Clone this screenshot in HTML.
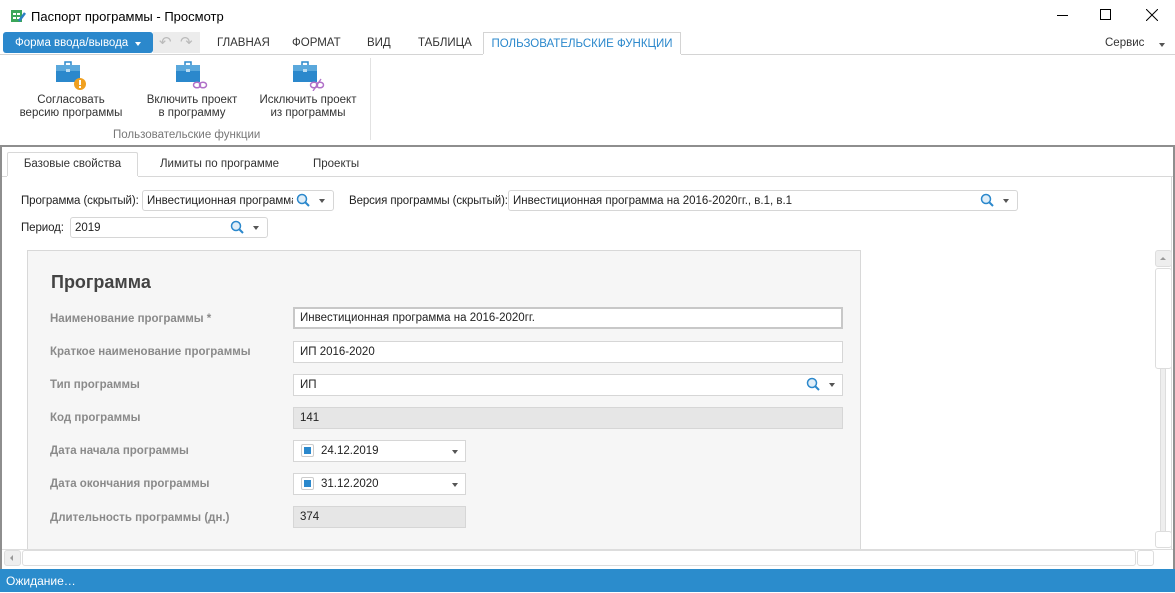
<!DOCTYPE html>
<html><head><meta charset="utf-8"><style>
*{box-sizing:border-box;margin:0;padding:0}
body{width:1175px;height:592px;position:relative;overflow:hidden;background:#fff;font-family:"Liberation Sans","DejaVu Sans",sans-serif;font-size:12px;color:#222}
.a{position:absolute;white-space:nowrap}
.inp{position:absolute;border:1px solid #d6d6d6;border-radius:3px;background:#fff;font-size:11.5px;padding-left:4px;line-height:20px;height:21px;overflow:hidden;white-space:nowrap}
.lbl{position:absolute;font-size:11.5px;color:#222;letter-spacing:-0.1px}
.fl{position:absolute;left:50px;font-size:11.5px;font-weight:bold;color:#8a8a8a}
.fi{position:absolute;left:293px;width:550px;height:22px;border:1px solid #d6d6d6;background:#fff;font-size:11.5px;line-height:21px;padding-left:6px;color:#222}
.tri{position:absolute;width:0;height:0;border-left:3.5px solid transparent;border-right:3.5px solid transparent;border-top:4px solid #555}
</style></head><body>
<!-- title bar -->
<svg class="a" style="left:10px;top:8px" width="16" height="16"><rect x="1" y="2" width="11" height="12" fill="#3aa65a"/><rect x="3" y="5" width="3" height="2" fill="#fff"/><rect x="7" y="5" width="3" height="2" fill="#fff"/><rect x="3" y="9" width="3" height="2" fill="#fff"/><rect x="7" y="9" width="3" height="2" fill="#fff"/><path d="M9 13 L15 5" stroke="#2b7fc4" stroke-width="2.5"/></svg>
<div class="a" style="left:31px;top:9px;font-size:13px;color:#000">Паспорт программы - Просмотр</div>
<div class="a" style="left:1057px;top:15px;width:11px;height:1px;background:#000"></div>
<div class="a" style="left:1100px;top:9px;width:11px;height:11px;border:1px solid #000"></div>
<svg class="a" style="left:1146px;top:9px" width="12" height="12"><path d="M0 0L12 12M12 0L0 12" stroke="#000" stroke-width="1"/></svg>
<!-- ribbon tabs -->
<div class="a" style="left:3px;top:32px;width:150px;height:21px;background:#2b88cc;border-radius:3px;color:#fff;font-size:11.5px;line-height:22px;padding-left:12px">Форма ввода/вывода</div>
<div class="tri" style="left:135px;top:42px;border-top-color:#fff"></div>
<div class="a" style="left:153px;top:32px;width:47px;height:21px;background:#ececec"></div>
<div class="a" style="left:159px;top:33px;color:#bbb;font-size:15px">↶</div>
<div class="a" style="left:180px;top:33px;color:#bbb;font-size:15px">↷</div>
<div class="a" style="left:217px;top:37px;font-size:11.5px;color:#333">ГЛАВНАЯ</div>
<div class="a" style="left:292px;top:37px;font-size:11.5px;color:#333">ФОРМАТ</div>
<div class="a" style="left:367px;top:37px;font-size:11.5px;color:#333">ВИД</div>
<div class="a" style="left:418px;top:37px;font-size:11.5px;color:#333">ТАБЛИЦА</div>
<div class="a" style="left:483px;top:32px;width:198px;height:23px;border:1px solid #d4d4d4;border-bottom:none;background:#fff;color:#2b88cc;font-size:11.5px;line-height:22px;text-align:center">ПОЛЬЗОВАТЕЛЬСКИЕ ФУНКЦИИ</div>
<div class="a" style="left:1105px;top:37px;font-size:11.5px;color:#333">Сервис</div>
<div class="tri" style="left:1159px;top:43px"></div>
<div class="a" style="left:0;top:54px;width:1175px;height:1px;background:#d4d4d4"></div>
<div class="a" style="left:483px;top:54px;width:198px;height:1px;background:#fff"></div>
<!-- ribbon content -->
<svg class="a" style="left:55px;top:61px" width="34" height="30"><rect x="10" y="1" width="6" height="4" fill="none" stroke="#2b88cc" stroke-width="1.5"/><rect x="1" y="4" width="24" height="17" fill="#2b88cc"/><rect x="1" y="4" width="24" height="6" fill="#5aa8dc"/><rect x="11" y="8" width="4" height="3" fill="#bcdcf2"/><circle cx="25" cy="23" r="6" fill="#f0a020"/><rect x="24" y="19" width="2" height="5" fill="#fff"/><rect x="24" y="25" width="2" height="2" fill="#fff"/></svg>
<svg class="a" style="left:175px;top:61px" width="34" height="30"><rect x="10" y="1" width="6" height="4" fill="none" stroke="#2b88cc" stroke-width="1.5"/><rect x="1" y="4" width="24" height="17" fill="#2b88cc"/><rect x="1" y="4" width="24" height="6" fill="#5aa8dc"/><rect x="11" y="8" width="4" height="3" fill="#bcdcf2"/><ellipse cx="22" cy="24" rx="3.5" ry="2.8" fill="none" stroke="#b070c8" stroke-width="1.5"/><ellipse cx="28" cy="24" rx="3.5" ry="2.8" fill="none" stroke="#b070c8" stroke-width="1.5"/></svg>
<svg class="a" style="left:292px;top:61px" width="34" height="30"><rect x="10" y="1" width="6" height="4" fill="none" stroke="#2b88cc" stroke-width="1.5"/><rect x="1" y="4" width="24" height="17" fill="#2b88cc"/><rect x="1" y="4" width="24" height="6" fill="#5aa8dc"/><rect x="11" y="8" width="4" height="3" fill="#bcdcf2"/><ellipse cx="22" cy="24" rx="3.5" ry="2.8" fill="none" stroke="#b070c8" stroke-width="1.5"/><ellipse cx="28" cy="24" rx="3.5" ry="2.8" fill="none" stroke="#b070c8" stroke-width="1.5"/><path d="M21 30 L29 18" stroke="#b070c8" stroke-width="1.3"/></svg>
<div class="a" style="left:15px;top:94px;width:112px;text-align:center;font-size:11.5px;line-height:13px;color:#333">Согласовать<br>версию программы</div>
<div class="a" style="left:136px;top:94px;width:112px;text-align:center;font-size:11.5px;line-height:13px;color:#333">Включить проект<br>в программу</div>
<div class="a" style="left:252px;top:94px;width:112px;text-align:center;font-size:11.5px;line-height:13px;color:#333">Исключить проект<br>из программы</div>
<div class="a" style="left:113px;top:129px;font-size:11.5px;color:#777">Пользовательские функции</div>
<div class="a" style="left:370px;top:58px;width:1px;height:82px;background:#e2e2e2"></div>
<div class="a" style="left:0;top:145px;width:1175px;height:2px;background:#8e8e8e"></div>
<div class="a" style="left:0;top:147px;width:2px;height:423px;background:#8e8e8e"></div>
<div class="a" style="left:1173px;top:147px;width:2px;height:423px;background:#8e8e8e"></div>
<!-- tabs -->
<div class="a" style="left:7px;top:152px;width:131px;height:25px;border:1px solid #d8d8d8;border-bottom:none;background:#fff;border-radius:2px 2px 0 0;font-size:11.5px;text-align:center;line-height:23px;color:#333">Базовые свойства</div>
<div class="a" style="left:160px;top:158px;font-size:11.5px;color:#333">Лимиты по программе</div>
<div class="a" style="left:313px;top:158px;font-size:11.5px;color:#333">Проекты</div>
<div class="a" style="left:2px;top:176px;width:1171px;height:1px;background:#d8d8d8"></div>
<div class="a" style="left:7px;top:176px;width:131px;height:1px;background:#fff"></div>
<div class="a" style="left:1171px;top:176px;width:1px;height:374px;background:#d8d8d8"></div>
<!-- top fields -->
<div class="lbl" style="left:21px;top:195px">Программа (скрытый):</div>
<div class="inp" style="left:142px;top:190px;width:192px"><span style="display:block;width:146px;overflow:hidden;white-space:nowrap">Инвестиционная программа на</span></div>
<div class="lbl" style="left:349px;top:195px">Версия программы (скрытый):</div>
<div class="inp" style="left:508px;top:190px;width:510px">Инвестиционная программа на 2016-2020гг., в.1, в.1</div>
<div class="lbl" style="left:21px;top:222px">Период:</div>
<div class="inp" style="left:70px;top:217px;width:198px">2019</div>
<svg class="a" style="left:296px;top:193px" width="15" height="15"><circle cx="6" cy="6" r="4.5" fill="#e0eef8" stroke="#2b88cc" stroke-width="1.5"/><path d="M9.5 9.5L13 13" stroke="#2b88cc" stroke-width="2"/></svg>
<div class="tri" style="left:319px;top:199px"></div>
<svg class="a" style="left:980px;top:193px" width="15" height="15"><circle cx="6" cy="6" r="4.5" fill="#e0eef8" stroke="#2b88cc" stroke-width="1.5"/><path d="M9.5 9.5L13 13" stroke="#2b88cc" stroke-width="2"/></svg>
<div class="tri" style="left:1003px;top:199px"></div>
<svg class="a" style="left:230px;top:220px" width="15" height="15"><circle cx="6" cy="6" r="4.5" fill="#e0eef8" stroke="#2b88cc" stroke-width="1.5"/><path d="M9.5 9.5L13 13" stroke="#2b88cc" stroke-width="2"/></svg>
<div class="tri" style="left:253px;top:226px"></div>
<!-- panel -->
<div class="a" style="left:27px;top:250px;width:834px;height:300px;background:#f6f6f6;border:1px solid #d8d8d8;border-bottom:none"></div>
<div class="a" style="left:51px;top:272px;font-size:18px;font-weight:bold;color:#444">Программа</div>
<div class="fl" style="top:313px">Наименование программы *</div>
<div class="fi" style="top:307px;border:2px solid #c8c8c8;line-height:19px;padding-left:5px">Инвестиционная программа на 2016-2020гг.</div>
<div class="fl" style="top:346px">Краткое наименование программы</div>
<div class="fi" style="top:341px">ИП 2016-2020</div>
<div class="fl" style="top:379px">Тип программы</div>
<div class="fi" style="top:374px">ИП</div>
<svg class="a" style="left:806px;top:377px" width="15" height="15"><circle cx="6" cy="6" r="4.5" fill="#e0eef8" stroke="#2b88cc" stroke-width="1.5"/><path d="M9.5 9.5L13 13" stroke="#2b88cc" stroke-width="2"/></svg>
<div class="tri" style="left:829px;top:383px"></div>
<div class="fl" style="top:412px">Код программы</div>
<div class="fi" style="top:407px;background:#e6e6e6">141</div>
<div class="fl" style="top:445px">Дата начала программы</div>
<div class="fi" style="top:440px;width:173px;padding-left:27px">24.12.2019</div>
<div class="a" style="left:301px;top:444px;width:13px;height:13px;border:1px solid #ccc;border-radius:2px;background:#fff"></div><div class="a" style="left:304px;top:447px;width:7px;height:7px;background:#2b88cc"></div>
<div class="tri" style="left:452px;top:450px"></div>
<div class="fl" style="top:478px">Дата окончания программы</div>
<div class="fi" style="top:473px;width:173px;padding-left:27px">31.12.2020</div>
<div class="a" style="left:301px;top:477px;width:13px;height:13px;border:1px solid #ccc;border-radius:2px;background:#fff"></div><div class="a" style="left:304px;top:480px;width:7px;height:7px;background:#2b88cc"></div>
<div class="tri" style="left:452px;top:483px"></div>
<div class="fl" style="top:512px">Длительность программы (дн.)</div>
<div class="fi" style="top:506px;width:173px;background:#e6e6e6">374</div>
<!-- scrollbars -->
<div class="a" style="left:1160px;top:268px;width:6px;height:280px;background:#eee;border:1px solid #ddd"></div>
<div class="a" style="left:1155px;top:250px;width:17px;height:17px;background:#eee;border:1px solid #ddd;border-radius:3px"></div>
<div class="a" style="left:1160px;top:257px;width:0;height:0;border-left:3px solid transparent;border-right:3px solid transparent;border-bottom:3px solid #999"></div>
<div class="a" style="left:1155px;top:268px;width:17px;height:101px;background:#fff;border:1px solid #ddd;border-radius:3px"></div>
<div class="a" style="left:1155px;top:531px;width:17px;height:17px;background:#fff;border:1px solid #ddd;border-radius:3px"></div>
<div class="a" style="left:2px;top:549px;width:1171px;height:1px;background:#ddd"></div>
<div class="a" style="left:4px;top:550px;width:17px;height:16px;background:#eee;border:1px solid #ddd;border-radius:3px"></div>
<div class="a" style="left:10px;top:555px;width:0;height:0;border-top:3px solid transparent;border-bottom:3px solid transparent;border-right:3px solid #999"></div>
<div class="a" style="left:22px;top:550px;width:1114px;height:16px;background:#fff;border:1px solid #ddd;border-radius:3px"></div>
<div class="a" style="left:1137px;top:550px;width:17px;height:16px;background:#fff;border:1px solid #ddd;border-radius:3px"></div>
<div class="a" style="left:2px;top:566px;width:1171px;height:4px;background:#fff"></div>
<!-- status -->
<div class="a" style="left:0;top:569px;width:1175px;height:23px;background:#2b8ccc;color:#fff;font-size:12px;line-height:24px;padding-left:6px">Ожидание…</div>
</body></html>
